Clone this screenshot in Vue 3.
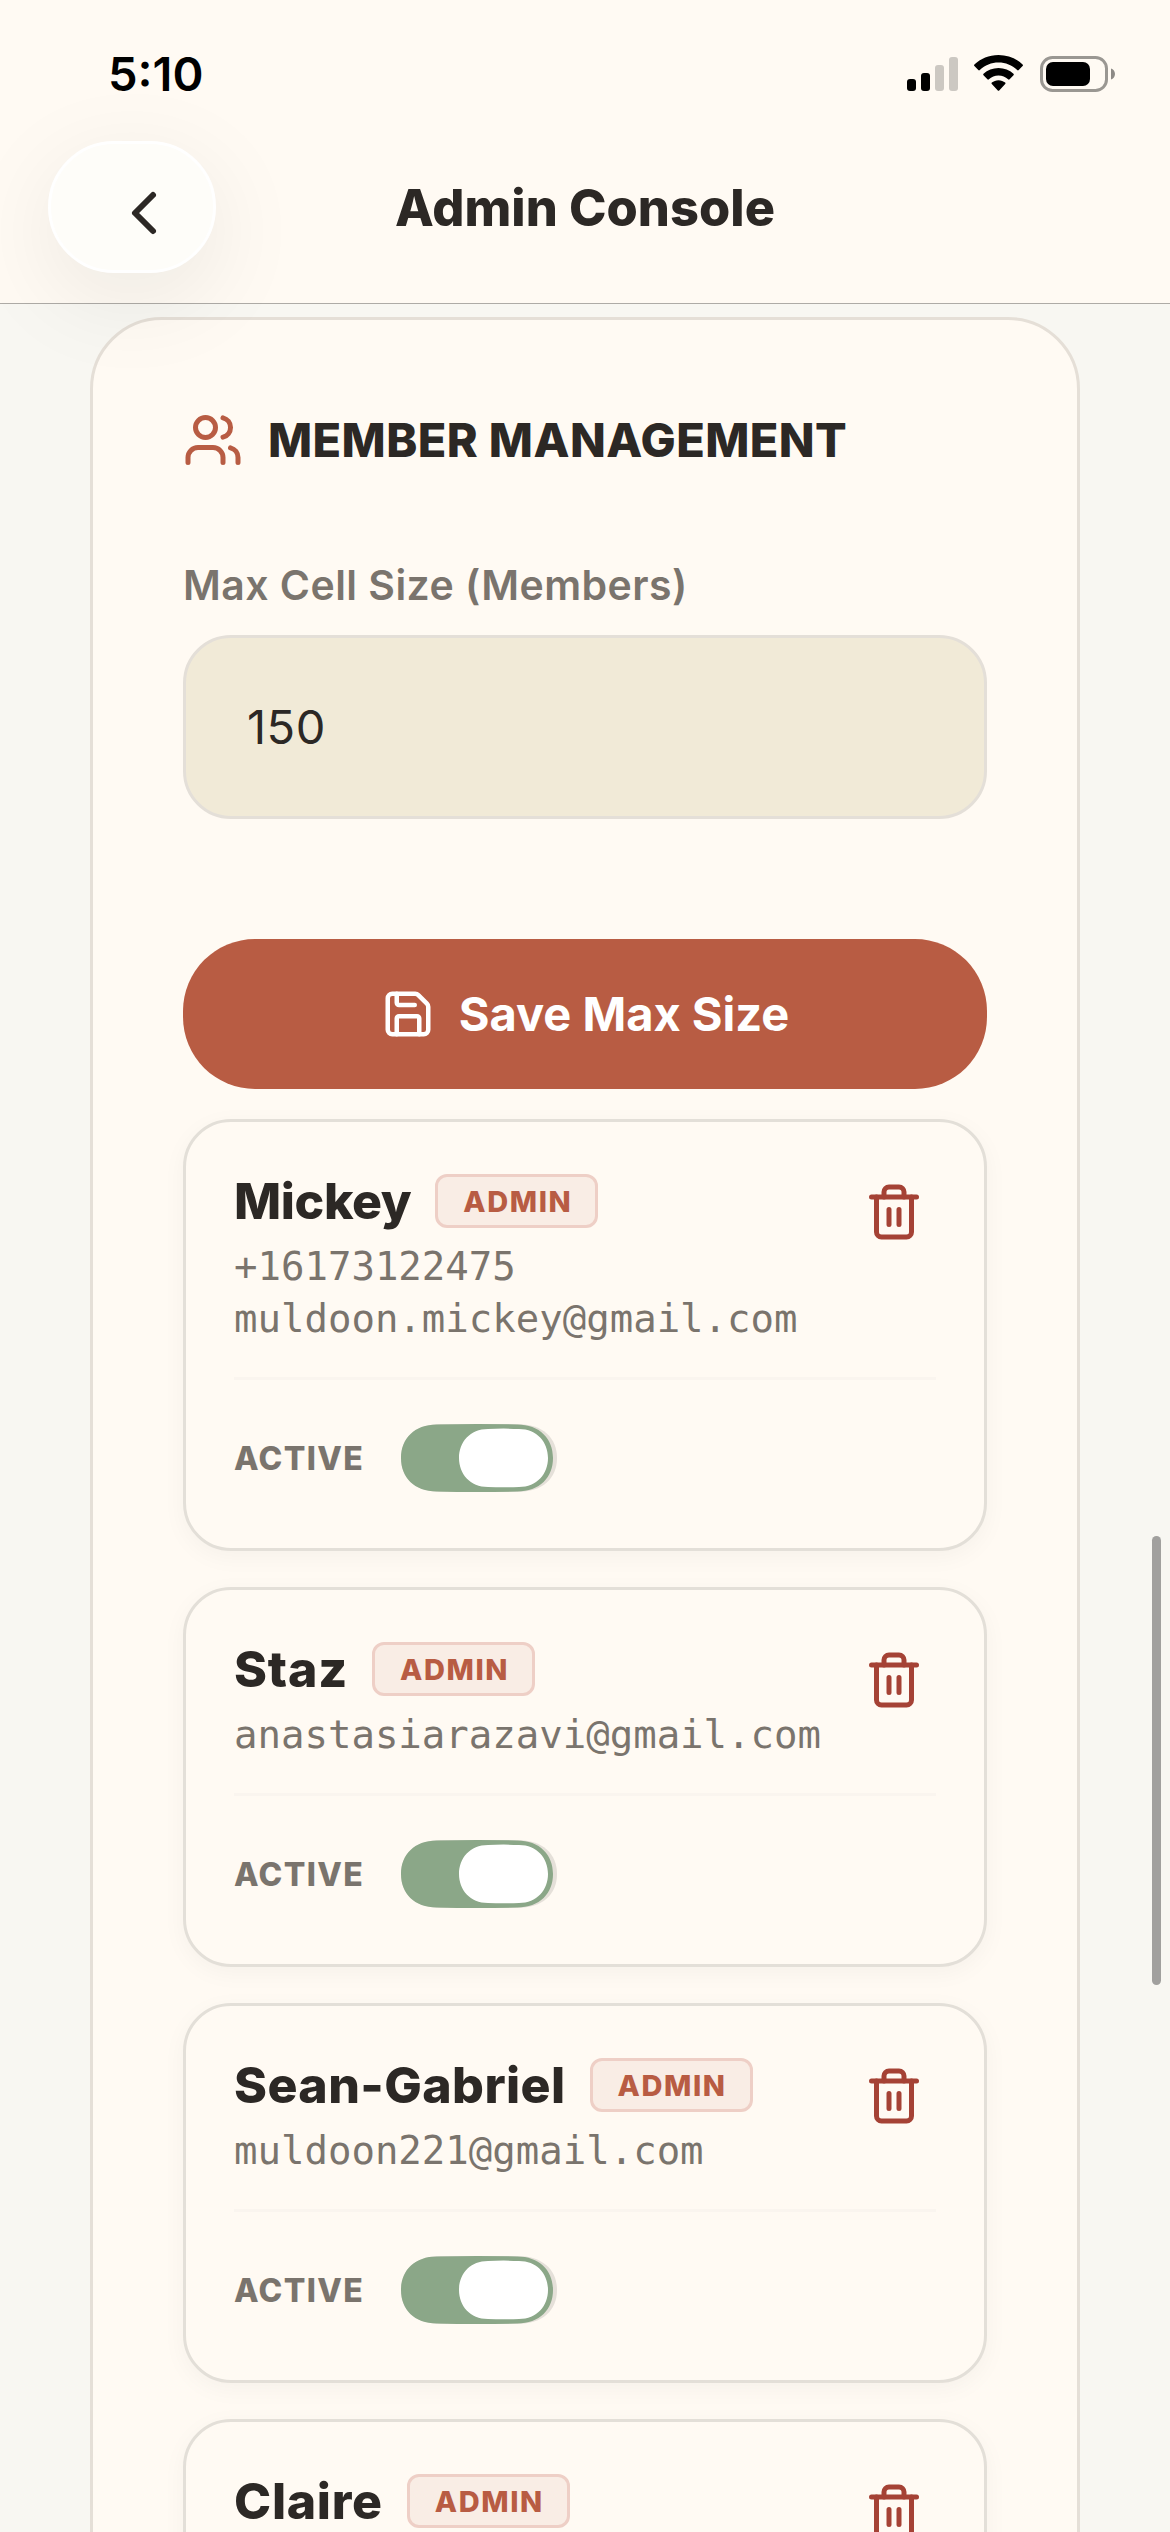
<script setup>
import { ref } from 'vue'

const maxSize = ref('150')
const members = [
  { name: 'Mickey', tracking: -0.4, contacts: ['+16173122475', 'muldoon.mickey@gmail.com'] },
  { name: 'Staz', tracking: 0.8, contacts: ['anastasiarazavi@gmail.com'] },
  { name: 'Sean-Gabriel', tracking: 0.4, contacts: ['muldoon221@gmail.com'] },
  { name: 'Claire', tracking: 0.7, contacts: [] },
]
</script>

<template>
  <div class="screen">
    <header class="header">
      <div class="status">
        <span class="time">5:10</span>
        <div class="indicators">
          <svg class="signal" width="51" height="34" viewBox="0 0 51 34">
            <rect x="0" y="22" width="9" height="12" rx="3" />
            <rect x="14" y="16" width="9" height="18" rx="3" />
            <rect x="28" y="8" width="9" height="26" rx="3" opacity="0.2" />
            <rect x="42" y="0" width="9" height="34" rx="3" opacity="0.2" />
          </svg>
          <svg class="wifi" width="49" height="36" viewBox="0 0 49 36">
            <path d="M24.5 0C34 0 42.4 3.5 48.6 9.6c.5.5.5 1 0 1.5l-3.9 4c-.5.5-1 .5-1.5 0C38 10.2 31.6 7.6 24.5 7.6S11 10.2 5.8 15.1c-.5.5-1 .5-1.5 0l-3.9-4c-.5-.5-.5-1 0-1.5C6.6 3.5 15 0 24.5 0z" />
            <path d="M24.5 13c5.8 0 11 2.2 15 5.8.5.5.5 1 0 1.5l-3.9 4c-.5.5-1 .5-1.5 0-2.6-2.3-5.9-3.7-9.6-3.7s-7 1.4-9.6 3.7c-.5.5-1 .5-1.5 0l-3.9-4c-.5-.5-.5-1 0-1.5 4-3.6 9.2-5.8 15-5.8z" />
            <path d="M24.5 25.2c2.6 0 4.9.9 6.7 2.4.5.5.5 1 0 1.5l-6 6.3c-.5.5-1 .5-1.4 0l-6-6.3c-.5-.5-.5-1 0-1.5 1.8-1.5 4.1-2.4 6.7-2.4z" />
          </svg>
          <svg class="battery" width="75" height="36" viewBox="0 0 75 36">
            <rect x="1.5" y="1.5" width="65" height="33" rx="11" fill="none" stroke="#9a9792" stroke-width="3" />
            <rect x="6" y="6" width="44" height="24" rx="7" />
            <path d="M71 12.5c2.4.8 4 3 4 5.5s-1.6 4.7-4 5.5z" fill="#8d8a86" />
          </svg>
        </div>
      </div>
      <nav class="nav">
        <button class="back" aria-label="Back">
          <svg width="72" height="72" viewBox="0 0 24 24" fill="none" stroke="#2c2825" stroke-width="2" stroke-linecap="round" stroke-linejoin="round">
            <path d="m15 18-6-6 6-6" />
          </svg>
        </button>
        <h1 class="title">Admin Console</h1>
      </nav>
    </header>

    <main class="content">
      <section class="panel">
        <div class="panel-head">
          <svg width="60" height="60" viewBox="0 0 24 24" fill="none" stroke="#b85c43" stroke-width="2" stroke-linecap="round" stroke-linejoin="round">
            <path d="M16 21v-2a4 4 0 0 0-4-4H6a4 4 0 0 0-4 4v2" />
            <circle cx="9" cy="7" r="4" />
            <path d="M22 21v-2a4 4 0 0 0-3-3.87" />
            <path d="M16 3.13a4 4 0 0 1 0 7.75" />
          </svg>
          <h2>MEMBER MANAGEMENT</h2>
        </div>

        <label class="field-label" for="max">Max Cell Size (Members)</label>
        <input id="max" v-model="maxSize" class="field" type="text" />

        <button class="save">
          <svg width="54" height="54" viewBox="0 0 24 24" fill="none" stroke="#fff" stroke-width="2" stroke-linecap="round" stroke-linejoin="round">
            <path d="M15.2 3a2 2 0 0 1 1.4.6l3.8 3.8a2 2 0 0 1 .6 1.4V19a2 2 0 0 1-2 2H5a2 2 0 0 1-2-2V5a2 2 0 0 1 2-2z" />
            <path d="M17 21v-7a1 1 0 0 0-1-1H8a1 1 0 0 0-1 1v7" />
            <path d="M7 3v4a1 1 0 0 0 1 1h7" />
          </svg>
          <span>Save Max Size</span>
        </button>

        <div class="members">
          <article v-for="m in members" :key="m.name" class="member">
            <div class="member-top">
              <div class="info">
                <div class="name-row">
                  <span class="name" :style="{ letterSpacing: m.tracking + 'px' }">{{ m.name }}</span>
                  <span class="badge">ADMIN</span>
                </div>
                <div class="contacts">
                  <div v-for="c in m.contacts" :key="c">{{ c }}</div>
                </div>
              </div>
              <button class="trash" aria-label="Remove member">
                <svg width="60" height="60" viewBox="0 0 24 24" fill="none" stroke="#a54235" stroke-width="2" stroke-linecap="round" stroke-linejoin="round">
                  <path d="M3 6h18" />
                  <path d="M19 6v14a2 2 0 0 1-2 2H7a2 2 0 0 1-2-2V6" />
                  <path d="M8 6V4a2 2 0 0 1 2-2h4a2 2 0 0 1 2 2v2" />
                  <path d="M10 11v6M14 11v6" />
                </svg>
              </button>
            </div>
            <div v-if="m.contacts.length" class="member-foot">
              <span class="active">ACTIVE</span>
              <svg width="156" height="68" viewBox="0 0 156 68">
                <path d="M40 0H116C142 0 156 14 156 34S142 68 116 68H40C14 68 0 54 0 34S14 0 40 0z" fill="#e5e0d9" />
                <path d="M36 .5Q76-.5 116 .5C139 .5 152 15 152 34S139 67.5 116 67.5Q76 68.5 36 67.5C13 67.5 0 53 0 34S13 .5 36 .5z" fill="#8ba788" />
                <path d="M87 5Q102.5 4.2 118 5C136 5 147 18 147 34S136 63 118 63Q102.5 63.6 87 63C69 63 58 50 58 34S69 5 87 5z" fill="#fff" />
              </svg>
            </div>
          </article>
        </div>
      </section>
      <div class="scrollbar"></div>
    </main>
  </div>
</template>

<style>
body {
  margin: 0;
  overflow: hidden;
}
</style>

<style scoped>
* {
  box-sizing: border-box;
}
.screen {
  width: 1170px;
  height: 2532px;
  overflow: hidden;
  background: #f8f7f2;
  font-family: Inter, "Liberation Sans", sans-serif;
  color: #2c2825;
}
button {
  border: 0;
  background: none;
  font-family: inherit;
}
svg {
  display: block;
  flex: none;
}
.header {
  position: relative;
  z-index: 2;
  height: 304px;
  background: #fffaf3;
  border-bottom: 1px solid #aeaba6;
}
.status {
  display: flex;
  justify-content: space-between;
  align-items: flex-start;
  height: 141px;
  padding: 46px 55px 0 108px;
}
.time {
  font-size: 47px;
  line-height: 56px;
  font-weight: 570;
  color: #000;
}
.indicators {
  display: flex;
  align-items: flex-start;
  padding-top: 9px;
}
.signal {
  margin-top: 2px;
}
.wifi {
  margin-left: 16px;
}
.battery {
  margin: 1px 0 0 17px;
}
.nav {
  display: grid;
  grid-template-columns: 168px 1fr 168px;
  align-items: center;
  height: 132px;
  padding: 0 48px;
}
.back {
  display: flex;
  align-items: center;
  justify-content: center;
  width: 168px;
  height: 132px;
  padding: 12px 0 0 24px;
  border: 3px solid #fff;
  border-radius: 66px;
  background: #fefdf9;
  box-shadow: 0 24px 96px rgba(10, 25, 25, 0.08);
}
.title {
  margin: 0;
  padding-top: 2px;
  text-align: center;
  font-size: 50.5px;
  line-height: 60px;
  font-weight: 790;
  letter-spacing: 0.05px;
}
.content {
  position: relative;
  padding: 13px 90px 0;
}
.panel {
  height: 2400px;
  padding: 90px;
  border: 3px solid #e5dfd7;
  border-radius: 72px;
  background: #fffaf3;
}
.panel-head {
  display: flex;
  align-items: center;
  gap: 25px;
  height: 60px;
}
.panel-head h2 {
  margin: 0;
  font-size: 46.8px;
  line-height: 60px;
  font-weight: 770;
  letter-spacing: 0.45px;
  white-space: nowrap;
}
.field-label {
  display: block;
  margin: 88px 0 23px;
  font-size: 41px;
  line-height: 54px;
  font-weight: 560;
  letter-spacing: 0.45px;
  color: #7a746d;
}
.field {
  display: block;
  width: 100%;
  height: 184px;
  padding: 0 61px 1px;
  border: 3px solid #e4dfd8;
  border-radius: 48px;
  background: #f1ead7;
  font-family: inherit;
  font-size: 47px;
  letter-spacing: 0.5px;
  color: #2c2825;
}
.save {
  display: flex;
  align-items: center;
  justify-content: center;
  gap: 24px;
  width: 100%;
  height: 150px;
  margin: 120px 0 30px;
  padding: 0;
  border-radius: 72px;
  background: #b85c43;
  color: #fff;
  font-size: 47px;
  font-weight: 660;
  letter-spacing: 0;
}
.save span {
  padding-bottom: 2px;
}
.members {
  display: flex;
  flex-direction: column;
  gap: 36px;
}
.member {
  padding: 48px 48px 56px;
  border: 3px solid #e3dfd8;
  border-radius: 48px;
  background: #fffaf3;
  box-shadow: 0 6px 24px rgba(0, 0, 0, 0.04);
}
.member-top {
  display: flex;
  justify-content: space-between;
  align-items: flex-start;
  padding-bottom: 32px;
}
.name-row {
  display: flex;
  align-items: center;
  gap: 24px;
  height: 62px;
}
.name {
  font-size: 50px;
  line-height: 58px;
  font-weight: 780;
}
.badge {
  width: 163px;
  height: 54px;
  padding-left: 25px;
  border: 3px solid #eecfc6;
  border-radius: 12px;
  background: #f9ede5;
  font-size: 29px;
  line-height: 50px;
  font-weight: 760;
  letter-spacing: 1.6px;
  color: #b85c43;
}
.contacts {
  margin-top: 9px;
  font-family: "DejaVu Sans Mono", monospace;
  font-size: 39px;
  line-height: 52px;
  color: #7a746d;
  white-space: nowrap;
}
.trash {
  width: 84px;
  height: 84px;
  padding: 12px;
}
.member-foot {
  display: flex;
  align-items: center;
  padding-top: 44px;
  border-top: 3px solid #faf5ef;
}
.active {
  width: 167px;
  padding-top: 2px;
  font-size: 32px;
  line-height: 40px;
  font-weight: 760;
  letter-spacing: 1.35px;
  color: #7a746d;
}
/* Scroll indicator floats over the page's right margin */
.scrollbar {
  position: absolute;
  top: 1232px;
  right: 9px;
  width: 9px;
  height: 449px;
  border-radius: 4.5px;
  background: #a1a09e;
}
</style>
